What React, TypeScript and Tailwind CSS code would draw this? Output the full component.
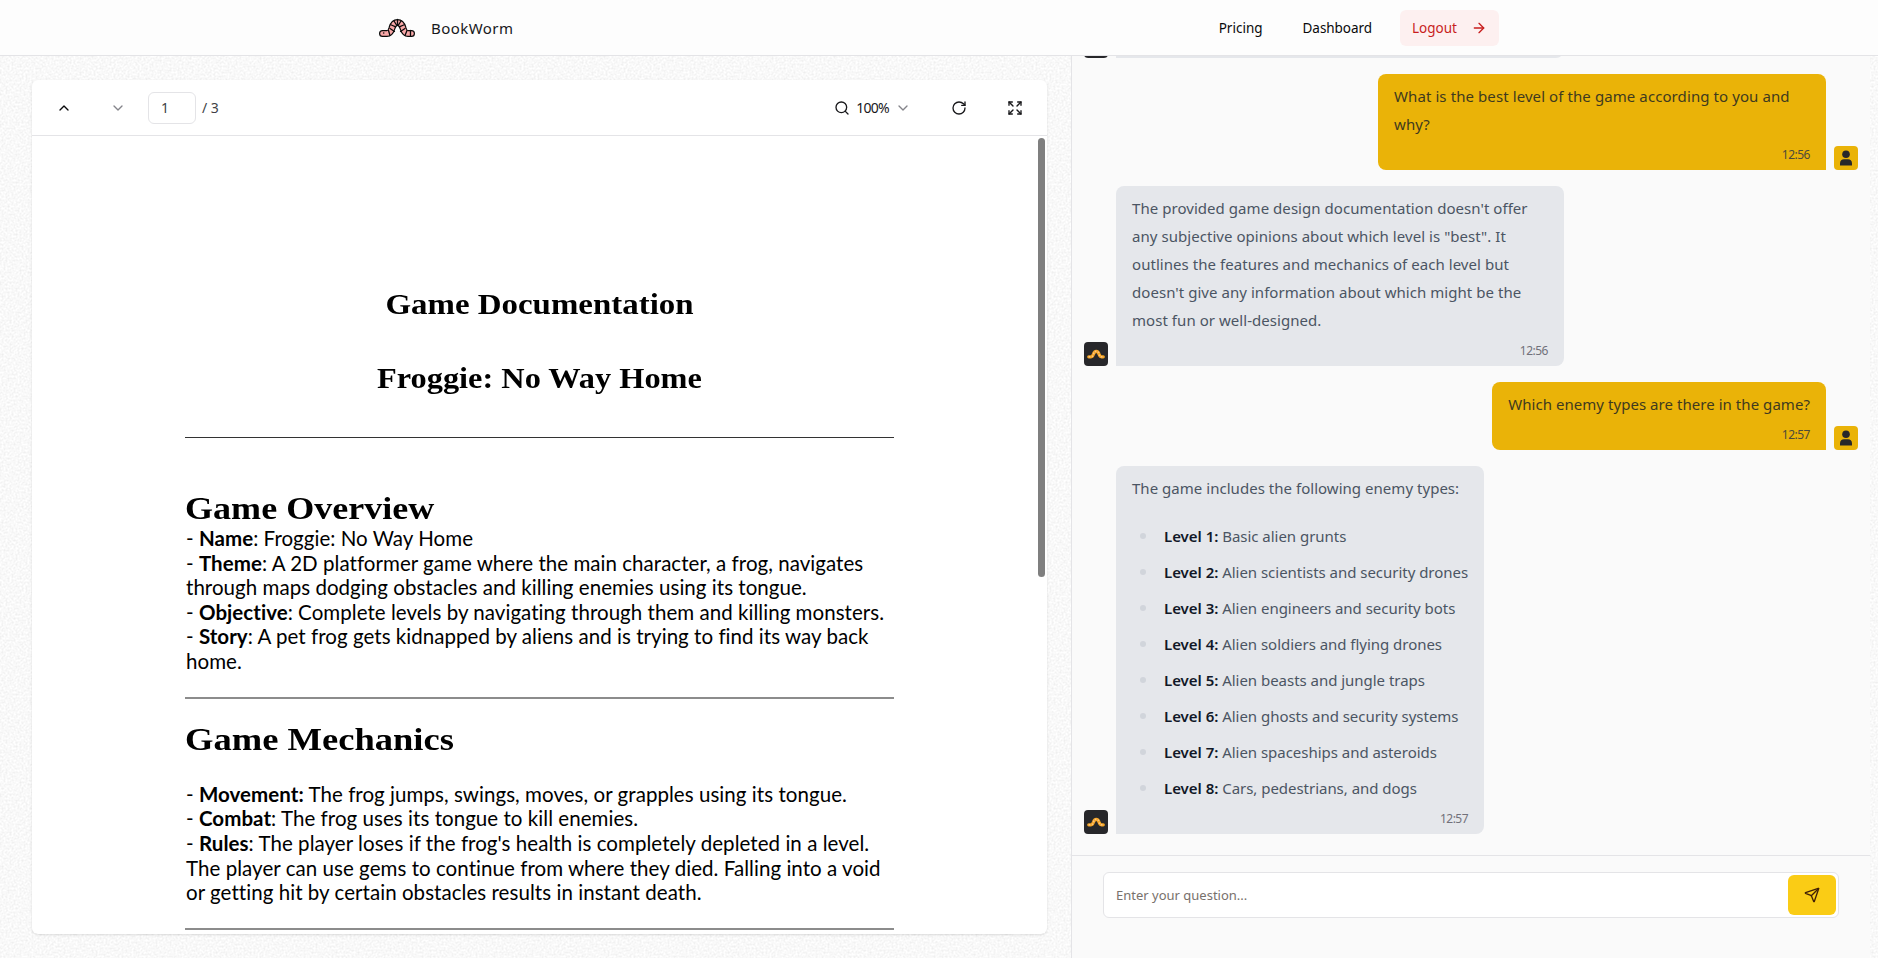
import type { ReactNode } from "react";
import {
  ArrowRight,
  ChevronDown,
  ChevronUp,
  Expand,
  RotateCw,
  Search,
  Send,
} from "lucide-react";

const WORM_PATH =
  "M3.5 15.5h4.5c3.5 0 4-2.500 5-5.500 1-3.500 2.500-5.500 5.500-5.500s4.500 2 5.500 5.500c1 3 1.500 5.500 5 5.500h3.500";

function WormLogo() {
  return (
    <svg className="h-5 w-9" viewBox="0 0 36 20" fill="none" strokeLinecap="round">
      <path d={WORM_PATH} stroke="#0a0a0a" strokeWidth="7" />
      <path d={WORM_PATH} stroke="#f9a8a8" strokeWidth="4.600" />
      <path
        d="M9.500 12.500l1.500 5M11 10.500l4.500 3M12.300 7l4.500 1.800M15 3l2.500 4M18.500 1.500v5M22 3l-2.500 4M24.700 7l-4.500 1.800M26 10.500l-4.500 3M28 12.500l-2 5M31.500 12.500v5"
        stroke="#0a0a0a"
        strokeWidth="1.300"
      />
      <circle cx="4.700" cy="15" r="0.800" fill="#0a0a0a" />
    </svg>
  );
}

function BotAvatar() {
  return (
    <div className="flex size-6 shrink-0 items-center justify-center rounded bg-[#27272a]">
      <svg className="h-[10px] w-[18px]" viewBox="0 0 36 20" fill="none" strokeLinecap="round">
        <path d={WORM_PATH} stroke="#f5a623" strokeWidth="6.500" />
        <path d={WORM_PATH} stroke="#fbc38d" strokeWidth="3" strokeDasharray="3 3" strokeLinecap="butt" />
      </svg>
    </div>
  );
}

function UserAvatar() {
  return (
    <div className="flex size-6 shrink-0 items-center justify-center rounded bg-[#eab308]">
      <svg className="size-4" viewBox="0 0 16 16" fill="#27272a">
        <circle cx="8" cy="4.200" r="3.800" />
        <path d="M2 15.500v-2.200c0-2.500 1.800-4 4-4h4c2.200 0 4 1.500 4 4v2.200z" />
      </svg>
    </div>
  );
}

function Message({ own, time, children }: { own?: boolean; time: string; children: ReactNode }) {
  return (
    <div className={own ? "flex items-end justify-end gap-2" : "flex items-end gap-2"}>
      {!own && <BotAvatar />}
      <div
        className={
          own
            ? "max-w-[448px] rounded-lg rounded-br-none bg-[#eab308] pt-2 pr-4 pb-[7px] pl-4 text-[#3f3a1f]"
            : "max-w-[448px] rounded-lg rounded-bl-none bg-[#e5e7eb] pt-2 pr-4 pb-[7px] pl-4 text-[#4b5563]"
        }
      >
        <div className="text-[15px] leading-7 tracking-[0.05px]">{children}</div>
        <div
          className={
            own
              ? "mt-[9px] text-right text-xs leading-4 tracking-[-0.5px] text-[#4d4a3a]"
              : "mt-[9px] text-right text-xs leading-4 tracking-[-0.5px] text-[#71717a]"
          }
        >
          {time}
        </div>
      </div>
      {own && <UserAvatar />}
    </div>
  );
}

const levels = [
  "Basic alien grunts",
  "Alien scientists and security drones",
  "Alien engineers and security bots",
  "Alien soldiers and flying drones",
  "Alien beasts and jungle traps",
  "Alien ghosts and security systems",
  "Alien spaceships and asteroids",
  "Cars, pedestrians, and dogs",
];

function Paper() {
  return (
    <svg className="absolute inset-0 h-full w-full" aria-hidden="true">
      <filter id="grain" x="0" y="0" width="100%" height="100%" colorInterpolationFilters="sRGB">
        <feTurbulence type="fractalNoise" baseFrequency="0.5" numOctaves="2" />
        <feColorMatrix
          type="matrix"
          values="0.12 0 0 0 0.915  0.12 0 0 0 0.915  0.12 0 0 0 0.915  0 0 0 0 1"
        />
      </filter>
      <rect width="100%" height="100%" filter="url(#grain)" />
    </svg>
  );
}

function Navbar() {
  return (
    <header className="relative flex h-14 shrink-0 items-center justify-between border-b border-[#e4e4e7] bg-[#fdfdfd] pr-[379px] pl-[379px]">
      <div className="flex items-center gap-4">
        <WormLogo />
        <span className="pt-px text-[15px] tracking-[0.45px] text-[#18181b]">BookWorm</span>
      </div>
      <nav className="flex items-center text-[13.5px] text-[#09090b]">
        <a className="px-3 pt-px">Pricing</a>
        <a className="ml-4 px-3 pt-px tracking-[-0.05px]">Dashboard</a>
        <a className="ml-4 flex h-9 w-[99px] items-center justify-between rounded-md bg-[#fdf0f0] px-3 text-[#c81e1e]">
          <span className="pt-px">Logout</span>
          <ArrowRight className="size-4" strokeWidth={2} />
        </a>
      </nav>
    </header>
  );
}

function Toolbar() {
  return (
    <div className="flex h-14 shrink-0 items-center justify-between border-b border-[#e4e4e7] pr-6 pl-6 text-sm text-[#3f3f46]">
      <div className="flex items-center">
        <ChevronUp className="size-4 text-[#09090b]" />
        <ChevronDown className="ml-[38px] size-4 text-[#84848a]" />
        <div className="ml-[22px] flex h-8 w-12 items-center rounded-md border border-[#e4e4e7] px-3">1</div>
        <span className="ml-1.5">/ 3</span>
      </div>
      <div className="flex items-center text-[#18181b]">
        <Search className="size-4" />
        <span className="ml-1.5 tracking-[-0.7px]">100%</span>
        <ChevronDown className="ml-1.5 size-4 text-[#84848a]" />
        <RotateCw className="ml-10 size-4" />
        <Expand className="ml-10 size-4" />
      </div>
    </div>
  );
}

function PdfPage() {
  return (
    <div className="flex-1 overflow-hidden pr-[153px] pl-[153px] text-black">
      <h1 className="mt-[150px] scale-x-[1.135] text-center font-['Liberation_Serif',serif] text-[29px] leading-9 font-bold">
        Game Documentation
      </h1>
      <h1 className="mt-[38px] scale-x-[1.115] text-center font-['Liberation_Serif',serif] text-[29px] leading-9 font-bold">
        Froggie: No Way Home
      </h1>
      <div className="mt-[41px] h-px bg-[#333]" />
      <h2 className="mt-[54px] origin-left scale-x-[1.145] font-['Liberation_Serif',serif] text-[31.5px] leading-[34px] font-bold">
        Game Overview
      </h2>
      <div className="pl-px font-[Lato,sans-serif] text-[20.5px] leading-[24.6px] tracking-[0.04px] whitespace-nowrap [font-variant-ligatures:none]">
        <p>- <b>Name</b>: Froggie: No Way Home</p>
        <p>- <b>Theme</b>: A 2D platformer game where the main character, a frog, navigates</p>
        <p>through maps dodging obstacles and killing enemies using its tongue.</p>
        <p>- <b>Objective</b>: Complete levels by navigating through them and killing monsters.</p>
        <p>- <b>Story</b>: A pet frog gets kidnapped by aliens and is trying to find its way back</p>
        <p>home.</p>
      </div>
      <div className="mt-[23px] h-0.5 bg-[#8c8c8c]" />
      <h2 className="mt-[24px] origin-left scale-x-[1.16] font-['Liberation_Serif',serif] text-[31.5px] leading-[34px] font-bold">
        Game Mechanics
      </h2>
      <div className="mt-[25px] pl-px font-[Lato,sans-serif] text-[20.5px] leading-[24.7px] tracking-[0.05px] whitespace-nowrap [font-variant-ligatures:none]">
        <p>- <b>Movement:</b> The frog jumps, swings, moves, or grapples using its tongue.</p>
        <p>- <b>Combat</b>: The frog uses its tongue to kill enemies.</p>
        <p>- <b>Rules</b>: The player loses if the frog's health is completely depleted in a level.</p>
        <p>The player can use gems to continue from where they died. Falling into a void</p>
        <p>or getting hit by certain obstacles results in instant death.</p>
      </div>
      <div className="mt-[23px] h-0.5 bg-[#8c8c8c]" />
    </div>
  );
}

export default function App() {
  return (
    <div className="relative flex h-[958px] w-[1878px] flex-col overflow-hidden font-['Noto_Sans',sans-serif]">
      <Paper />
      <Navbar />
      <main className="relative flex min-h-0 flex-1">
        <section className="w-[1071px] shrink-0 pt-6 pr-6 pb-6 pl-8">
          <div className="relative flex h-full flex-col rounded-md bg-white shadow-sm">
            <Toolbar />
            <PdfPage />
            <div className="absolute top-[58px] right-[2px] h-[439px] w-[7px] rounded-full bg-[#7f7f7f]" />
          </div>
        </section>
        <section className="flex w-[799px] shrink-0 flex-col border-l border-[#e4e4e7] bg-[#fafafa]">
          <div className="flex min-h-0 flex-1 flex-col justify-end gap-4 overflow-hidden px-3 pb-[21px]">
            <div className="flex items-end gap-2">
              <BotAvatar />
              <div className="h-10 w-[448px] rounded-lg rounded-bl-none bg-[#e5e7eb]" />
            </div>
            <Message own time="12:56">
              <span className="tracking-[0.09px]">What is the best level of the game according to you and why?</span>
            </Message>
            <Message time="12:56">
              The provided game design documentation doesn't offer any subjective opinions about which level is
              "best". It outlines the features and mechanics of each level but doesn't give any information about
              which might be the most fun or well-designed.
            </Message>
            <Message own time="12:57">Which enemy types are there in the game?</Message>
            <Message time="12:57">
              <p className="tracking-[0.03px]">The game includes the following enemy types:</p>
              <ul className="mt-5 flex flex-col gap-2 pl-2">
                {levels.map((text, i) => (
                  <li key={text} className="flex items-center tracking-[-0.03px] whitespace-nowrap">
                    <span className="mr-[18px] size-1.5 rounded-full bg-[#d1d5db]" />
                    <span>
                      <b className="font-semibold text-[#111827]">Level {i + 1}:</b> {text}
                    </span>
                  </li>
                ))}
              </ul>
            </Message>
          </div>
          <div className="h-[103px] shrink-0 border-t border-[#e4e4e7] pt-4 pr-[31px] pl-[31px]">
            <div className="flex h-[46px] items-center justify-between rounded-md border border-[#e4e4e7] bg-white pr-0.5 pl-3">
              <span className="pt-px text-[13px] text-[#78716c]">Enter your question...</span>
              <button className="flex h-10 w-12 items-center justify-center rounded-md bg-[#facc15] text-[#422006]">
                <Send className="size-4" />
              </button>
            </div>
          </div>
        </section>
      </main>
    </div>
  );
}
